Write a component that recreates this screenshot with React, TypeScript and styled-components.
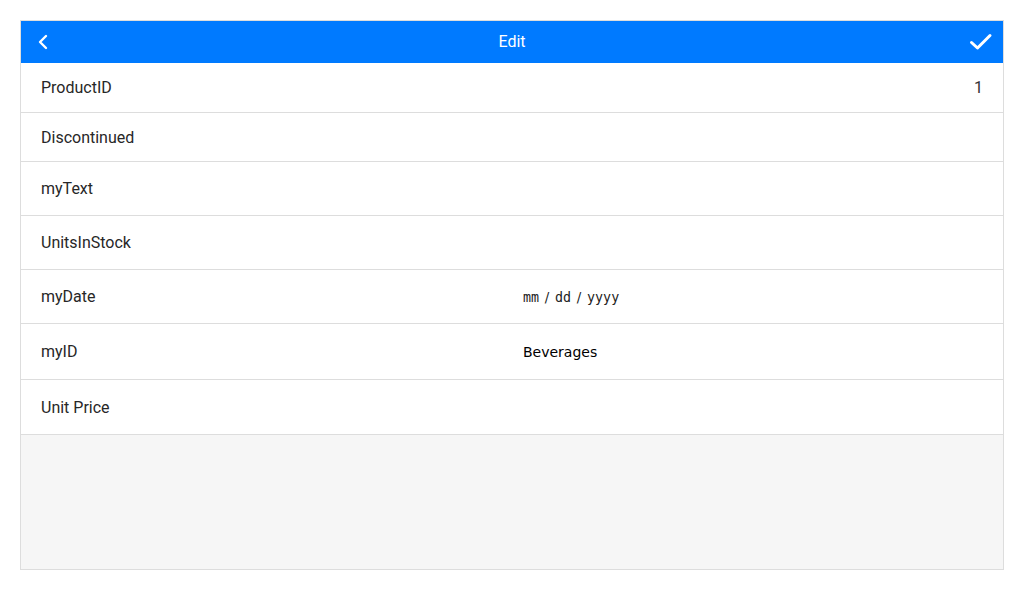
import React from "react";
import styled, { createGlobalStyle } from "styled-components";

const GlobalStyle = createGlobalStyle`
  html, body { margin: 0; padding: 0; background: #ffffff; }
  body { font-family: Roboto, "Liberation Sans", sans-serif; }
  * { box-sizing: border-box; }
`;

const Page = styled.div`
  padding: 20px 20px 0 20px;
  width: 1024px;
`;

const Panel = styled.div`
  width: 984px;
  height: 550px;
  border: 1px solid #dddddd;
  display: flex;
  flex-direction: column;
  background: #ffffff;
`;

const Header = styled.div`
  height: 42px;
  flex: 0 0 42px;
  background: #007aff;
  color: #ffffff;
  display: grid;
  grid-template-columns: 60px 1fr 60px;
  align-items: center;
`;

const Title = styled.div`
  text-align: center;
  font-size: 16px;
  font-family: Roboto, sans-serif;
  line-height: 42px;
`;

const IconButton = styled.div<{ $side: "left" | "right" }>`
  display: flex;
  align-items: center;
  justify-content: ${(p) => (p.$side === "left" ? "flex-start" : "flex-end")};
  padding: ${(p) => (p.$side === "left" ? "0 0 0 15px" : "0 10px 0 0")};
  height: 42px;
`;

const Row = styled.div<{ $h: number }>`
  height: ${(p) => p.$h + 1}px;
  flex: 0 0 ${(p) => p.$h + 1}px;
  border-bottom: 1px solid #dddddd;
  display: grid;
  grid-template-columns: 1fr 1fr;
  align-items: center;
  padding: 0 20px;
`;

const Label = styled.div`
  font-family: Roboto, sans-serif;
  font-size: 16px;
  color: #272727;
`;

const Value = styled.div<{ $align?: "left" | "right" }>`
  padding-left: ${(p) => (p.$align === "right" ? "0" : "1px")};
  text-align: ${(p) => p.$align ?? "left"};
  font-family: Roboto, sans-serif;
  font-size: 16px;
  color: #333333;
`;

const SelectText = styled.span`
  font-family: "DejaVu Sans", sans-serif;
  font-size: 14px;
  color: #000000;
`;

const DateText = styled.span`
  display: inline-flex;
  align-items: baseline;
  color: #222222;
  font-size: 13.33px;
`;

const DateSeg = styled.span`
  font-family: "DejaVu Sans Mono", monospace;
`;

const DateSep = styled.span`
  font-family: "DejaVu Sans", sans-serif;
  white-space: pre;
  margin: 0 1.5px;
`;

const Filler = styled.div`
  flex: 1;
  background: #f6f6f6;
`;

const rows: { label: string; h: number; kind?: "id" | "date" | "select" }[] = [
  { label: "ProductID", h: 49, kind: "id" },
  { label: "Discontinued", h: 48 },
  { label: "myText", h: 53 },
  { label: "UnitsInStock", h: 53 },
  { label: "myDate", h: 53, kind: "date" },
  { label: "myID", h: 55, kind: "select" },
  { label: "Unit Price", h: 54 },
];

export default function App() {
  return (
    <>
      <GlobalStyle />
      <Page>
        <Panel>
          <Header>
            <IconButton $side="left">
              <svg width="14" height="18" viewBox="0 0 14 18">
                <path d="M10 3 L4 9 L10 15" fill="none" stroke="#fff" strokeWidth="2.4" strokeLinecap="round" strokeLinejoin="round" />
              </svg>
            </IconButton>
            <Title>Edit</Title>
            <IconButton $side="right">
              <svg width="24" height="20" viewBox="0 0 24 20">
                <path d="M2.5 10.5 L8.5 16 L21 3.5" fill="none" stroke="#fff" strokeWidth="3" strokeLinecap="round" strokeLinejoin="round" />
              </svg>
            </IconButton>
          </Header>
          {rows.map((r) => (
            <Row key={r.label} $h={r.h}>
              <Label>{r.label}</Label>
              {r.kind === "id" ? (
                <Value $align="right">1</Value>
              ) : r.kind === "date" ? (
                <Value style={{ paddingLeft: 11 }}>
                  <DateText>
                    <DateSeg>mm</DateSeg>
                    <DateSep> / </DateSep>
                    <DateSeg>dd</DateSeg>
                    <DateSep> / </DateSep>
                    <DateSeg>yyyy</DateSeg>
                  </DateText>
                </Value>
              ) : r.kind === "select" ? (
                <Value style={{ paddingLeft: 11 }}>
                  <SelectText>Beverages</SelectText>
                </Value>
              ) : (
                <Value />
              )}
            </Row>
          ))}
          <Filler />
        </Panel>
      </Page>
    </>
  );
}
